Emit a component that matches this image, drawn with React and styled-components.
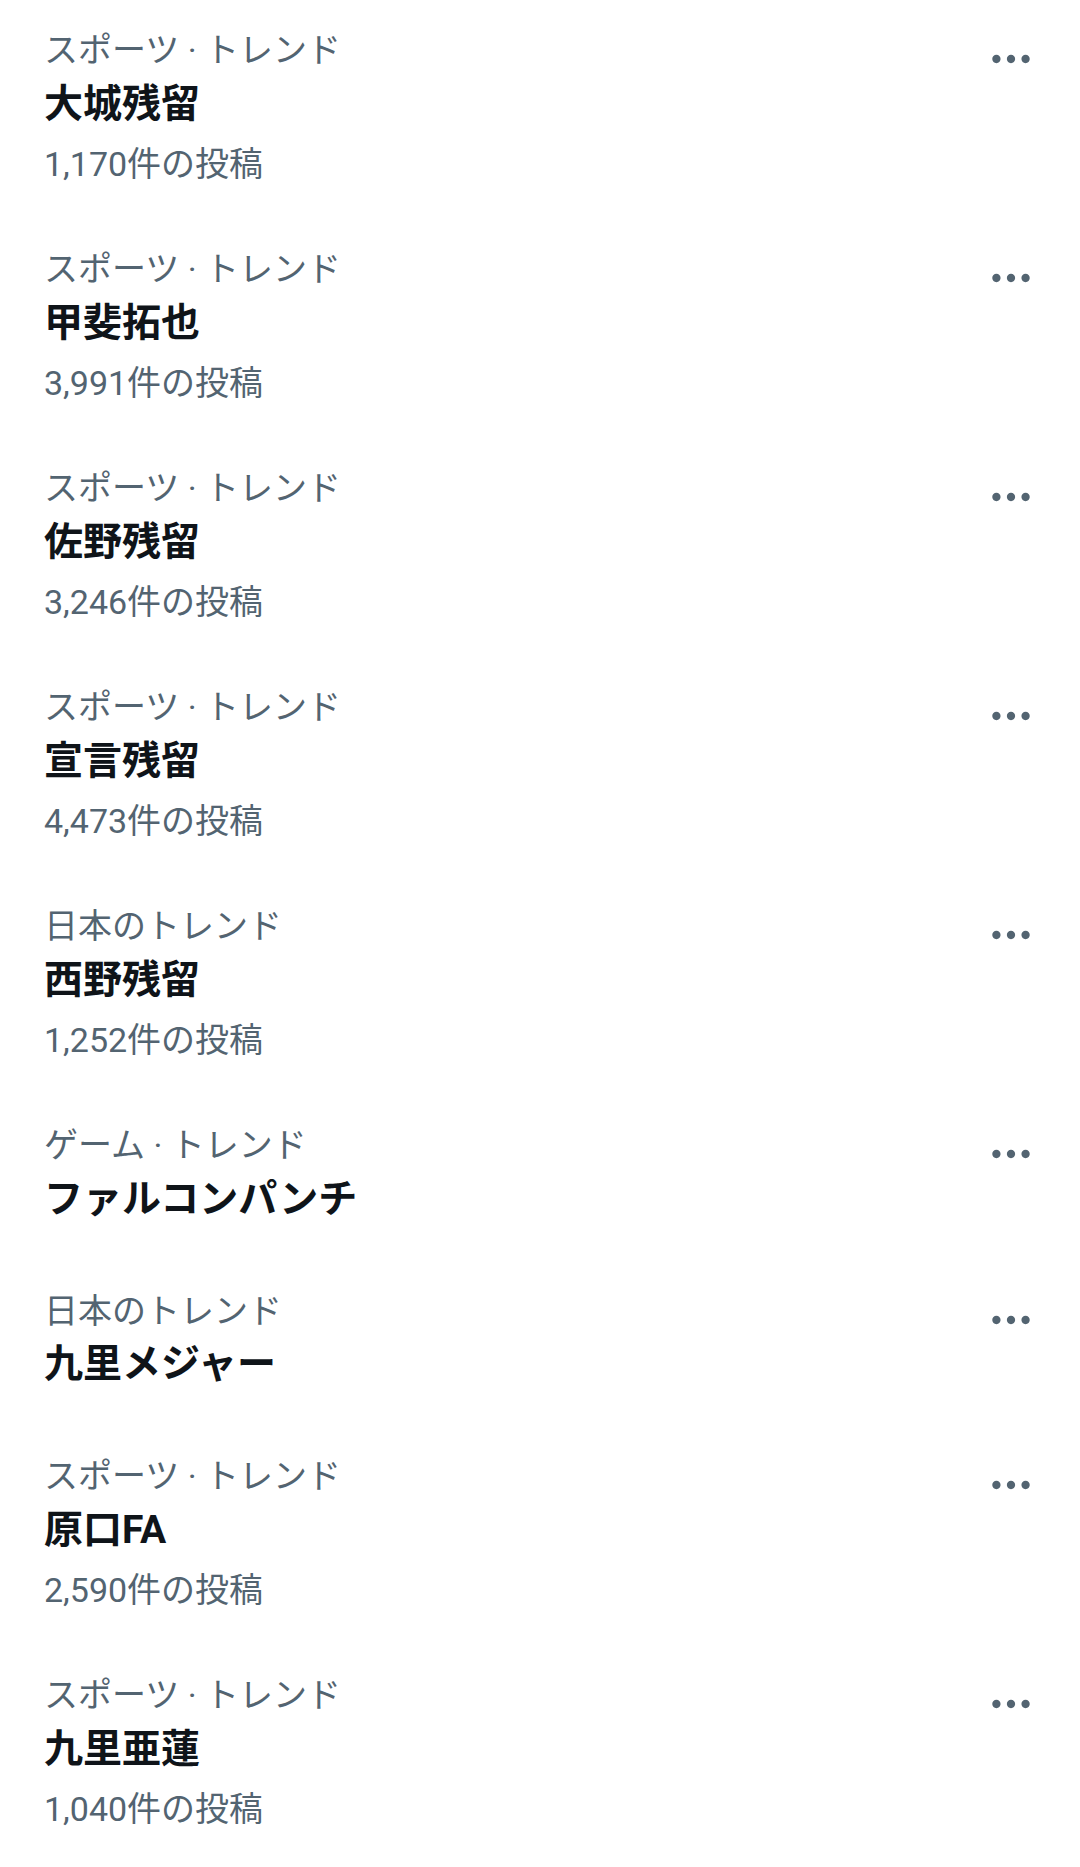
import styled, { createGlobalStyle } from 'styled-components';

const GlobalStyle = createGlobalStyle`
  html, body {
    margin: 0;
    padding: 0;
    background: #ffffff;
  }
  body {
    font-family: Roboto, "Noto Sans CJK JP", sans-serif;
    -webkit-font-smoothing: antialiased;
  }
`;

const trends = [
  { category: 'スポーツ · トレンド', title: '大城残留', posts: '1,170件の投稿' },
  { category: 'スポーツ · トレンド', title: '甲斐拓也', posts: '3,991件の投稿' },
  { category: 'スポーツ · トレンド', title: '佐野残留', posts: '3,246件の投稿' },
  { category: 'スポーツ · トレンド', title: '宣言残留', posts: '4,473件の投稿' },
  { category: '日本のトレンド', title: '西野残留', posts: '1,252件の投稿' },
  { category: 'ゲーム · トレンド', title: 'ファルコンパンチ' },
  { category: '日本のトレンド', title: '九里メジャー' },
  { category: 'スポーツ · トレンド', title: '原口FA', posts: '2,590件の投稿' },
  { category: 'スポーツ · トレンド', title: '九里亜蓮', posts: '1,040件の投稿' },
];

const List = styled.div`
  display: flex;
  flex-direction: column;
  margin-top: -1px;
`;

const Item = styled.div`
  display: flex;
  align-items: flex-start;
  padding: 30px 44px 35px 44px;
`;

const Content = styled.div`
  flex: 1;
  display: flex;
  flex-direction: column;
  min-width: 0;
`;

const Category = styled.div`
  font-size: 34px;
  line-height: 42px;
  color: #536471;
  white-space: nowrap;
`;

const Title = styled.div`
  padding-top: 6.5px;
  font-size: 39px;
  line-height: 52px;
  font-weight: 700;
  color: #0f1419;
  white-space: nowrap;
`;

const Posts = styled.div`
  margin-top: 16.5px;
  font-size: 34px;
  line-height: 37px;
  color: #536471;
  white-space: nowrap;
`;

const MoreButton = styled.button`
  flex: none;
  display: flex;
  align-items: center;
  justify-content: center;
  width: 50px;
  height: 50px;
  margin-top: 5px;
  padding: 0;
  border: none;
  background: transparent;
  color: #536471;
  cursor: pointer;

  svg {
    width: 50px;
    height: 50px;
    fill: currentColor;
  }
`;

function MoreIcon() {
  return (
    <svg viewBox="0 0 24 24" aria-hidden="true">
      <path d="M3 12c0-1.1.9-2 2-2s2 .9 2 2-.9 2-2 2-2-.9-2-2zm9 2c1.1 0 2-.9 2-2s-.9-2-2-2-2 .9-2 2 .9 2 2 2zm7 0c1.1 0 2-.9 2-2s-.9-2-2-2-2 .9-2 2 .9 2 2 2z" />
    </svg>
  );
}

function TrendItem({ category, title, posts }) {
  return (
    <Item>
      <Content>
        <Category>{category}</Category>
        <Title>{title}</Title>
        {posts && <Posts>{posts}</Posts>}
      </Content>
      <MoreButton type="button" aria-label="その他">
        <MoreIcon />
      </MoreButton>
    </Item>
  );
}

export default function App() {
  return (
    <>
      <GlobalStyle />
      <List>
        {trends.map((trend, i) => (
          <TrendItem key={i} {...trend} />
        ))}
      </List>
    </>
  );
}
